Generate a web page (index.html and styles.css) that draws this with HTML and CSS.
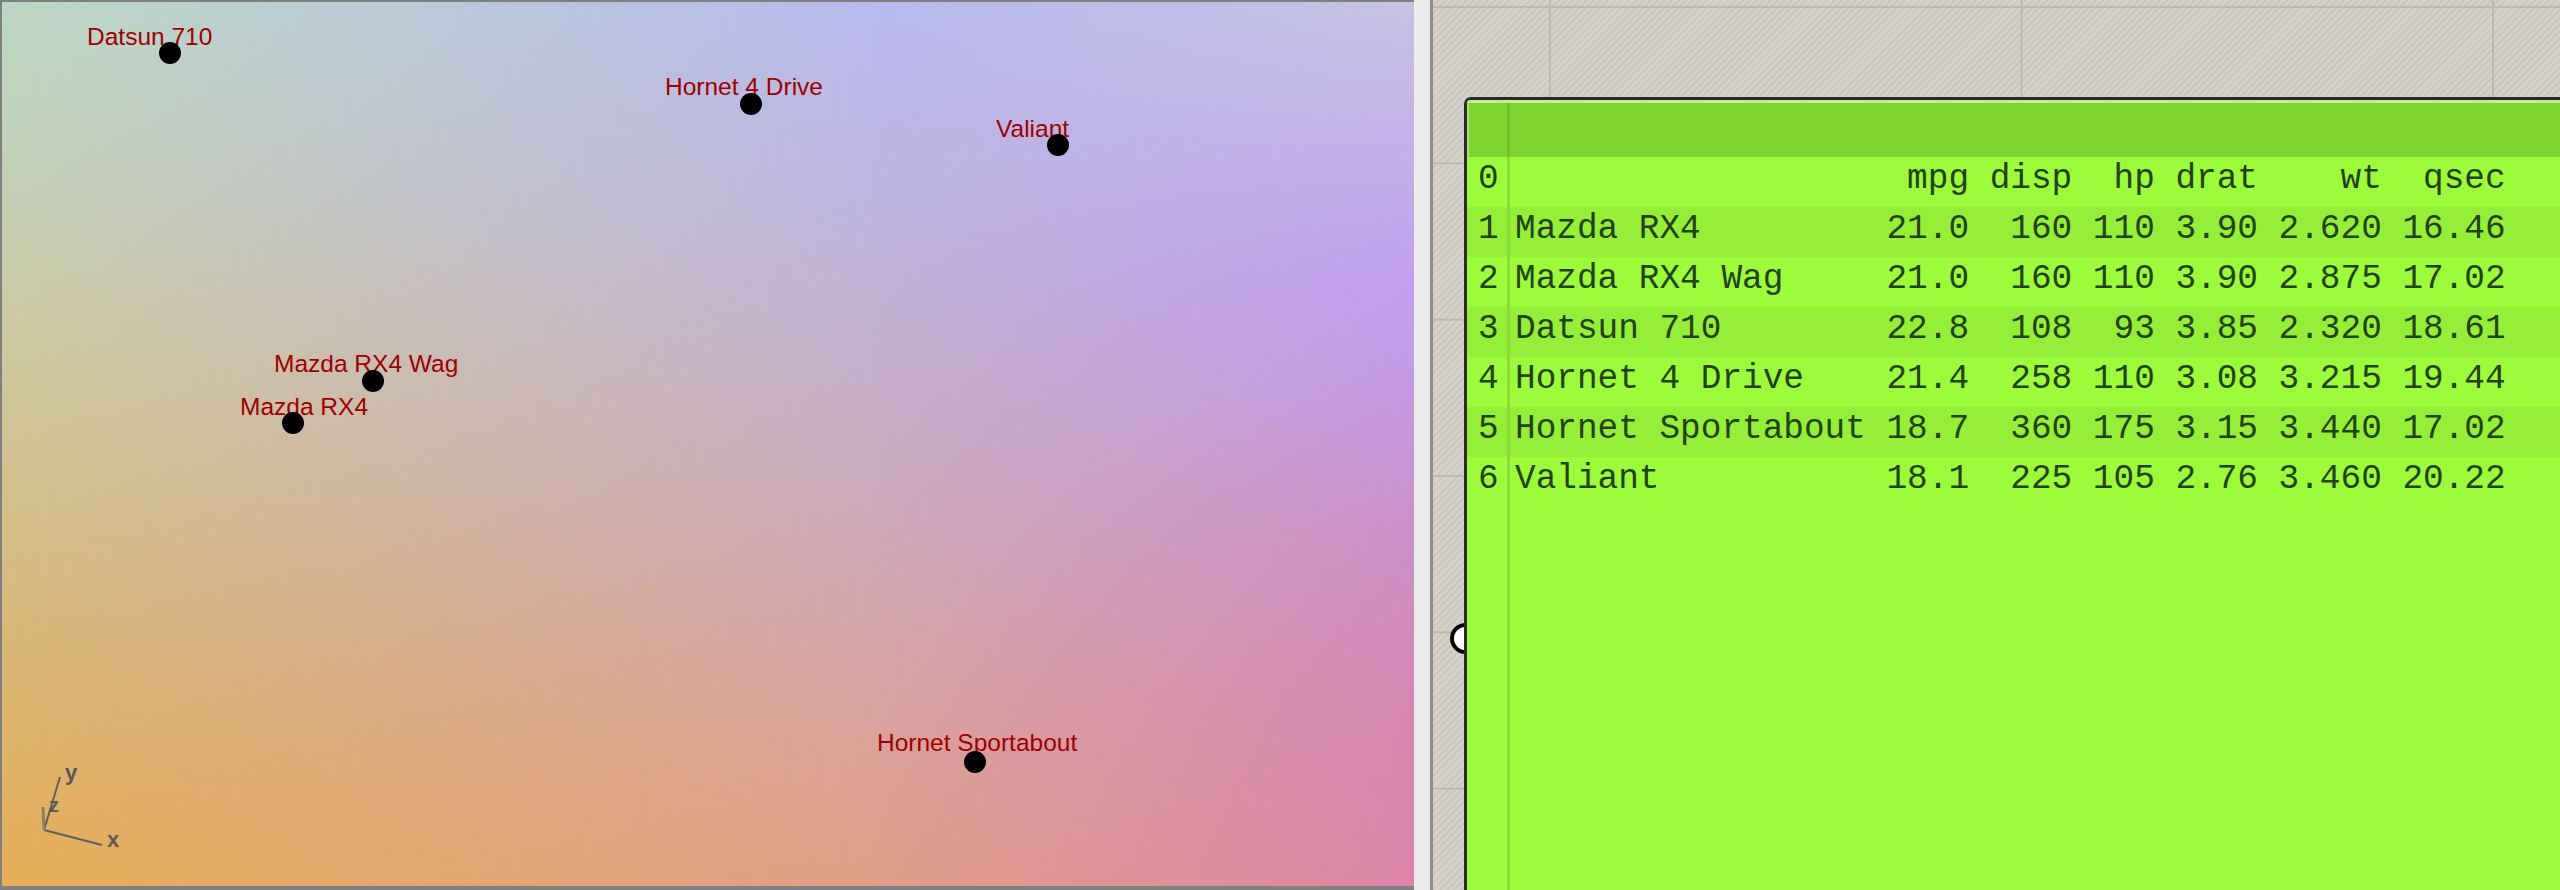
FILE: index.html
```html
<!DOCTYPE html>
<html lang="en">
<head>
<meta charset="utf-8">
<title>Viewport and panel</title>
<link rel="stylesheet" href="styles.css">
</head>
<body>
<div class="app">
  <section class="viewport">
    <div class="plot">
      <span class="label" style="left:85px;top:23px">Datsun 710</span>
      <span class="label" style="left:663px;top:73px">Hornet 4 Drive</span>
      <span class="label" style="left:994px;top:115px">Valiant</span>
      <span class="label" style="left:272px;top:350px">Mazda RX4 Wag</span>
      <span class="label" style="left:238px;top:393px">Mazda RX4</span>
      <span class="label" style="left:875px;top:729px">Hornet Sportabout</span>

      <span class="dot" style="left:157px;top:40px"></span>
      <span class="dot" style="left:738px;top:91px"></span>
      <span class="dot" style="left:1045px;top:132px"></span>
      <span class="dot" style="left:360px;top:368px"></span>
      <span class="dot" style="left:280px;top:410px"></span>
      <span class="dot" style="left:962px;top:749px"></span>

      <svg class="axes" width="120" height="100" viewBox="0 0 120 100">
        <line x1="24" y1="70" x2="82" y2="85" class="ax"/>
        <line x1="24" y1="70" x2="40" y2="17" class="ax"/>
        <line x1="24" y1="70" x2="23" y2="47" class="ax az"/>
        <text x="87" y="87" class="axl">x</text>
        <text x="45" y="20" class="axl">y</text>
        <text x="29" y="52" class="axl axz">z</text>
      </svg>
    </div>
  </section>

  <div class="splitter"></div>

  <section class="canvas">
    <span class="socket"></span>
    <div class="node">
      <div class="node-head"><span class="idx"></span><span class="txt"></span></div>
      <div class="row"><span class="idx">0</span><span class="txt">                   mpg disp  hp drat    wt  qsec</span></div>
      <div class="row alt"><span class="idx">1</span><span class="txt">Mazda RX4         21.0  160 110 3.90 2.620 16.46</span></div>
      <div class="row"><span class="idx">2</span><span class="txt">Mazda RX4 Wag     21.0  160 110 3.90 2.875 17.02</span></div>
      <div class="row alt"><span class="idx">3</span><span class="txt">Datsun 710        22.8  108  93 3.85 2.320 18.61</span></div>
      <div class="row"><span class="idx">4</span><span class="txt">Hornet 4 Drive    21.4  258 110 3.08 3.215 19.44</span></div>
      <div class="row alt"><span class="idx">5</span><span class="txt">Hornet Sportabout 18.7  360 175 3.15 3.440 17.02</span></div>
      <div class="row"><span class="idx">6</span><span class="txt">Valiant           18.1  225 105 2.76 3.460 20.22</span></div>
      <div class="filler"><span class="idx"></span><span class="txt"></span></div>
    </div>
  </section>
</div>
</body>
</html>
```
FILE: styles.css
```css
html, body {
  margin: 0;
  padding: 0;
}
body {
  width: 2560px;
  height: 890px;
  overflow: hidden;
  background: #d3cfc8;
  font-family: "Liberation Sans", Arial, sans-serif;
}
.app {
  display: flex;
  height: 890px;
}

/* ---------- left viewport ---------- */
.viewport {
  flex: none;
  width: 1414px;
  height: 890px;
  box-sizing: border-box;
  border-left: 2px solid #808080;
  border-top: 2px solid #808080;
  border-bottom: 4px solid #808080;
}
.plot {
  position: relative;
  height: 100%;
  overflow: hidden;
  background: linear-gradient(to bottom,
    #bcd9c5 0%, #c5cfb3 22%, #cdc9a0 38%, #d1c392 50%,
    #d8b97a 70%, #e7ae56 100%);
}
.plot::before,
.plot::after {
  content: "";
  position: absolute;
  inset: 0;
  pointer-events: none;
}
.plot::before {
  background: linear-gradient(to bottom,
    #b8b9ee 0%, #bdb5e0 22%, #c6b0cc 42%, #d0a9b6 62%,
    #daa39c 82%, #e19e88 100%);
  -webkit-mask-image: linear-gradient(to right, transparent 0%, #000 62%);
  mask-image: linear-gradient(to right, transparent 0%, #000 62%);
}
.plot::after {
  background: linear-gradient(to bottom,
    #c5c3e1 0%, #c3b2e8 15%, #c19fef 32%, #c599e2 45%,
    #cc90c8 60%, #d588b4 78%, #dc84a8 100%);
  -webkit-mask-image: linear-gradient(to right, transparent 62%, #000 100%);
  mask-image: linear-gradient(to right, transparent 62%, #000 100%);
}
.label {
  position: absolute;
  z-index: 1;
  font-family: "Liberation Sans", Arial, sans-serif;
  font-size: 24.5px;
  line-height: 1;
  color: #9e0000;
  white-space: nowrap;
}
.dot {
  position: absolute;
  z-index: 2;
  width: 22px;
  height: 22px;
  border-radius: 50%;
  background: #000;
}
.axes {
  position: absolute;
  z-index: 1;
  left: 18px;
  top: 758px;
}
.ax {
  stroke: #5e5e5e;
  stroke-width: 2;
}
.az {
  stroke: #8a806a;
  stroke-width: 3;
}
.axl {
  font-family: "Liberation Sans", Arial, sans-serif;
  font-weight: bold;
  font-size: 22px;
  fill: #5a5a5a;
}
.axz {
  font-size: 20px;
}

/* ---------- splitter ---------- */
.splitter {
  flex: none;
  width: 16px;
  background: #ebebeb;
  border-right: 3px solid #8e8e8e;
}

/* ---------- canvas ---------- */
.canvas {
  flex: 1;
  position: relative;
  overflow: hidden;
  display: flex;
  align-items: flex-start;
  padding: 97px 0 0 31px;
  background-color: #d3cfc8;
  background-image:
    linear-gradient(to bottom, #bcb8b0 2px, transparent 2px),
    linear-gradient(to right, #bcb8b0 2px, transparent 2px),
    repeating-linear-gradient(135deg, #d5d1ca 0 3px, #cbc7c0 3px 5px);
  background-size: 100% 156.33px, 471.5px 100%, auto;
  background-position: 0 6px, 116px 0, 0 0;
}
.socket {
  position: absolute;
  left: 17px;
  top: 623px;
  width: 23px;
  height: 23px;
  border: 4px solid #000;
  border-radius: 50%;
  background: #fff;
  z-index: 0;
}
.node {
  position: relative;
  z-index: 1;
  flex: none;
  width: 1200px;
  height: 820px;
  display: flex;
  flex-direction: column;
  overflow: hidden;
  border-left: 3px solid #2b2b2b;
  border-top: 3px solid #2b2b2b;
  border-top-left-radius: 7px;
  background: #9cfb3b;
  font-family: "Liberation Mono", "Courier New", monospace;
  font-size: 34.4px;
  color: #24421a;
}
.node-head {
  flex: none;
  display: flex;
  height: 57px;
  background: #80d430;
  box-shadow: inset 0 3px 0 #c3ef90, inset 2px 0 0 #a8e46a;
}
.row {
  flex: none;
  display: flex;
  height: 50px;
  line-height: 44px;
}
.row.alt {
  background: #95ef38;
}
.filler {
  flex: 1;
  display: flex;
}
.idx {
  flex: none;
  width: 29px;
  padding-left: 11px;
  border-right: 3px solid #8bdd33;
}
.node-head .idx {
  border-right-color: #72c329;
  margin-top: 3px;
}
.txt {
  padding-left: 5px;
  white-space: pre;
}
```
